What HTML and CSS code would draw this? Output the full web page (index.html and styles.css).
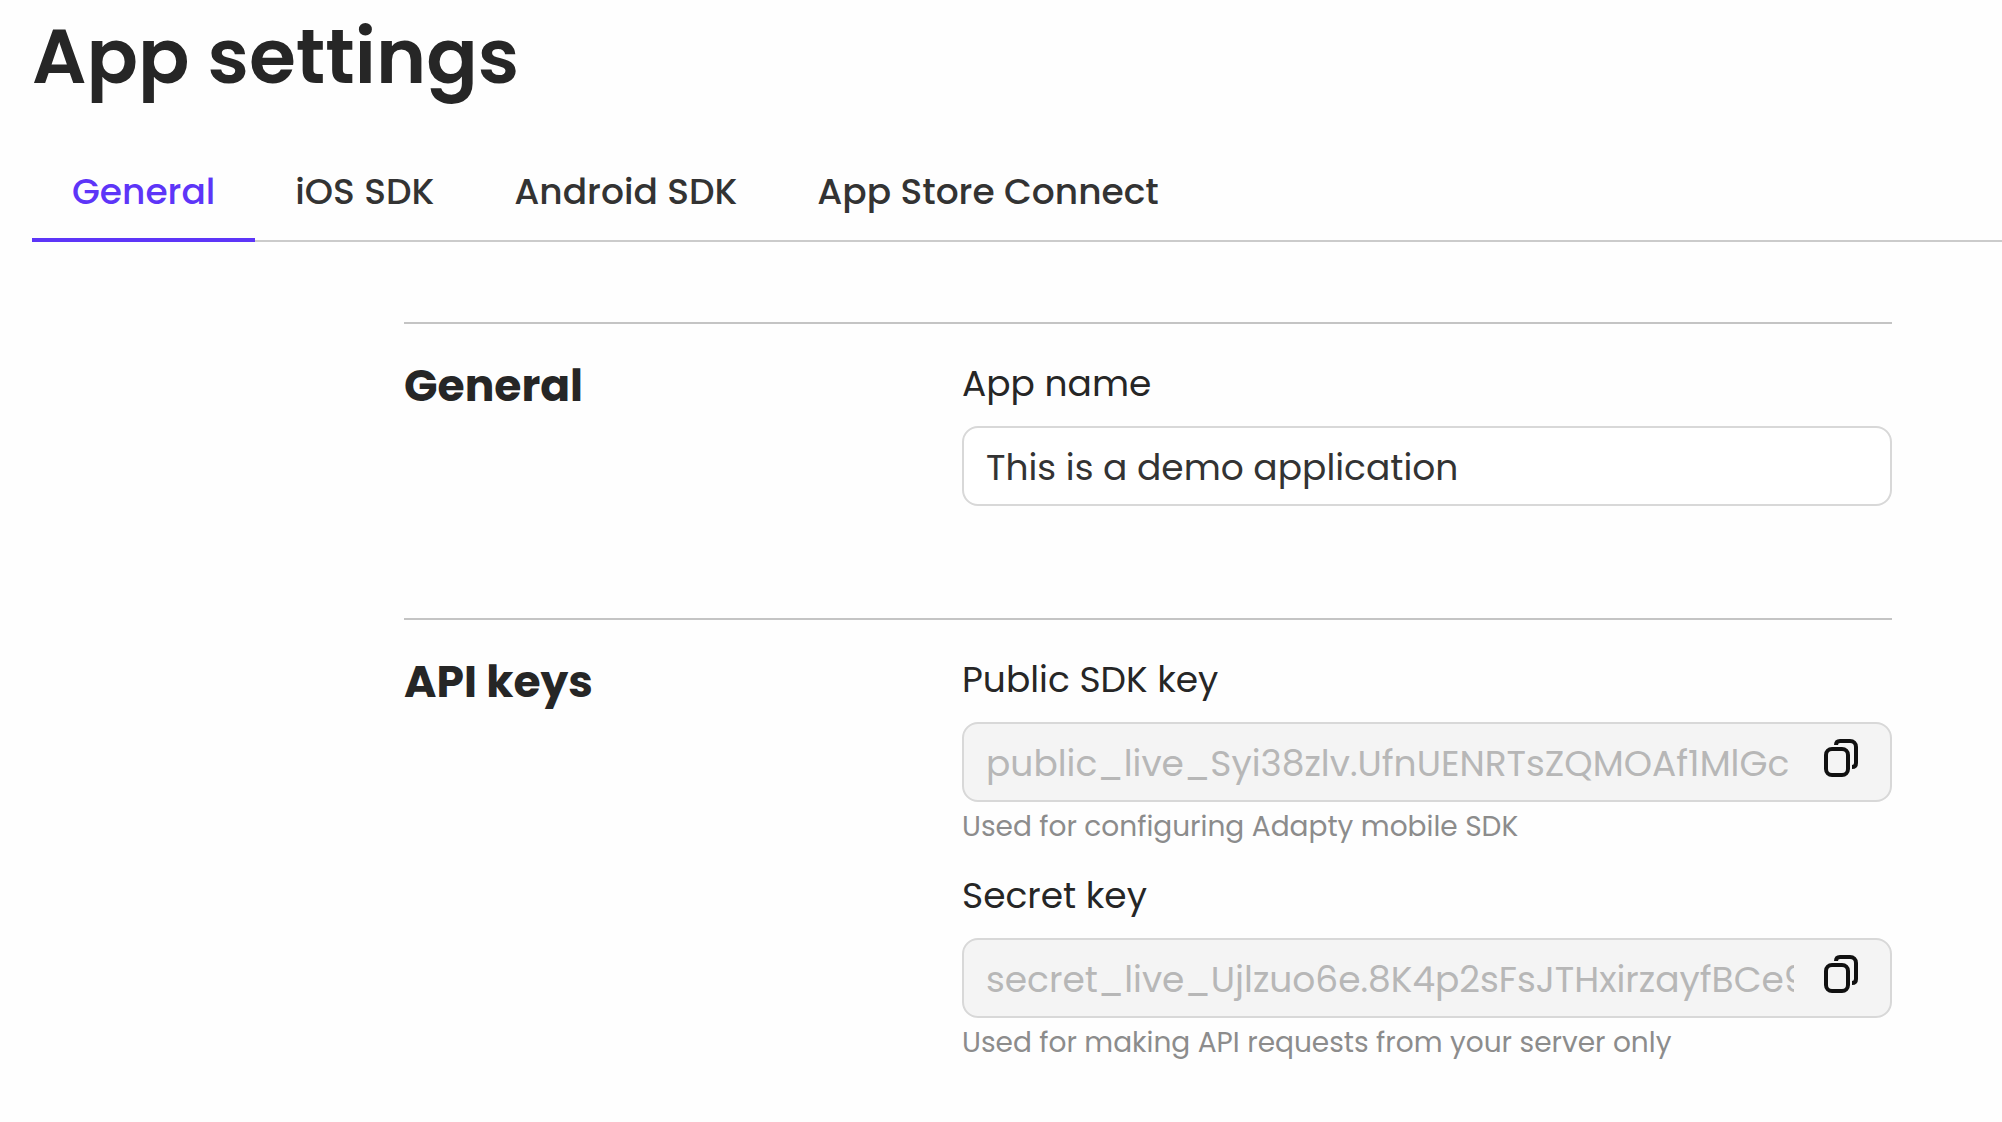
FILE: index.html
```html
<!DOCTYPE html>
<html lang="en">
<head>
<meta charset="utf-8">
<meta name="viewport" content="width=device-width, initial-scale=1">
<title>App settings</title>
<link rel="stylesheet" href="styles.css">
</head>
<body>
<header class="page-header">
  <h1 class="page-title">App settings</h1>
  <nav class="tabs" aria-label="Settings sections">
    <a class="tab tab-active" href="#general" aria-current="page">General</a>
    <a class="tab" href="#ios-sdk">iOS SDK</a>
    <a class="tab" href="#android-sdk">Android SDK</a>
    <a class="tab" href="#app-store-connect">App Store Connect</a>
  </nav>
</header>
<main class="content">
  <section class="section" id="general">
    <h2 class="section-title">General</h2>
    <div class="fields">
      <div class="field">
        <label class="label" for="app-name">App name</label>
        <input class="input" id="app-name" type="text" value="This is a demo application">
      </div>
    </div>
  </section>
  <section class="section">
    <h2 class="section-title">API keys</h2>
    <div class="fields">
      <div class="field">
        <label class="label" for="public-key">Public SDK key</label>
        <div class="key-box">
          <input class="key-input" id="public-key" type="text" readonly value="public_live_Syi38zlv.UfnUENRTsZQMOAf1MlGc">
          <button class="copy" type="button" aria-label="Copy public SDK key">
            <svg class="copy-icon" viewBox="0 0 34 38" aria-hidden="true"><rect x="2" y="10" width="22" height="26" rx="6"/><path d="M12 6C12 3.500 13.500 2 16 2H26C29.500 2 32 4.500 32 8V24C32 26.500 30.500 28 28 28"/></svg>
          </button>
        </div>
        <p class="hint">Used for configuring Adapty mobile SDK</p>
      </div>
      <div class="field">
        <label class="label" for="secret-key">Secret key</label>
        <div class="key-box">
          <input class="key-input" id="secret-key" type="text" readonly value="secret_live_Ujlzuo6e.8K4p2sFsJTHxirzayfBCe9c">
          <button class="copy" type="button" aria-label="Copy secret key">
            <svg class="copy-icon" viewBox="0 0 34 38" aria-hidden="true"><rect x="2" y="10" width="22" height="26" rx="6"/><path d="M12 6C12 3.500 13.500 2 16 2H26C29.500 2 32 4.500 32 8V24C32 26.500 30.500 28 28 28"/></svg>
          </button>
        </div>
        <p class="hint">Used for making API requests from your server only</p>
      </div>
    </div>
  </section>
</main>
</body>
</html>
```
FILE: styles.css
```css
* {
  box-sizing: border-box;
}

body {
  margin: 0;
  background: #fefefe;
  color: #262626;
  font-family: Poppins, Inter, "Liberation Sans", sans-serif;
  font-size: 36px;
  line-height: 56px;
}

.page-header {
  padding: 12px 0 0 32px;
}

.page-title {
  margin: 0;
  font-size: 76px;
  font-weight: 600;
  line-height: 90px;
}

.tabs {
  display: flex;
  margin-top: 62px;
  box-shadow: inset 0 -2px #cbcbcb;
}

.tab {
  padding: 0 40px 18px;
  border-bottom: 4px solid transparent;
  color: #333;
  font-weight: 500;
  text-decoration: none;
  white-space: nowrap;
}

.tab-active {
  border-color: #5d35f8;
  color: #5d35f8;
}

.content {
  padding: 80px 110px 48px 404px;
}

.section {
  display: grid;
  grid-template-columns: 3fr 5fr;
  padding: 32px 0 112px;
  border-top: 2px solid #c4c4c4;
}

.section:last-child {
  padding-bottom: 0;
}

.section-title {
  margin: 0;
  font-size: 44px;
  font-weight: 700;
  line-height: 60px;
}

.fields {
  display: grid;
  gap: 20px;
  min-width: 0;
}

.label {
  display: block;
  margin-bottom: 14px;
}

.input,
.key-box {
  width: 100%;
  height: 80px;
  border: 2px solid #d8d8d8;
  border-radius: 16px;
}

.input {
  display: block;
  padding: 2px 22px 0;
  background: #fff;
  color: #333;
  font: inherit;
}

.key-box {
  display: flex;
  align-items: center;
  padding: 0 30px 0 22px;
  background: #f4f4f4;
}

.key-input {
  flex: 1;
  min-width: 0;
  height: 76px;
  padding: 2px 0 0;
  border: 0;
  outline: 0;
  background: none;
  color: #b7b7b7;
  font: inherit;
}

.copy {
  display: flex;
  margin-left: 28px;
  padding: 0 2px 8px;
  border: 0;
  background: none;
  cursor: pointer;
}

.copy-icon {
  width: 34px;
  height: 38px;
  fill: none;
  stroke: #111;
  stroke-width: 4;
}

.hint {
  margin: 4px 0 0;
  color: #8c8c8c;
  font-size: 28px;
  line-height: 42px;
}
```
